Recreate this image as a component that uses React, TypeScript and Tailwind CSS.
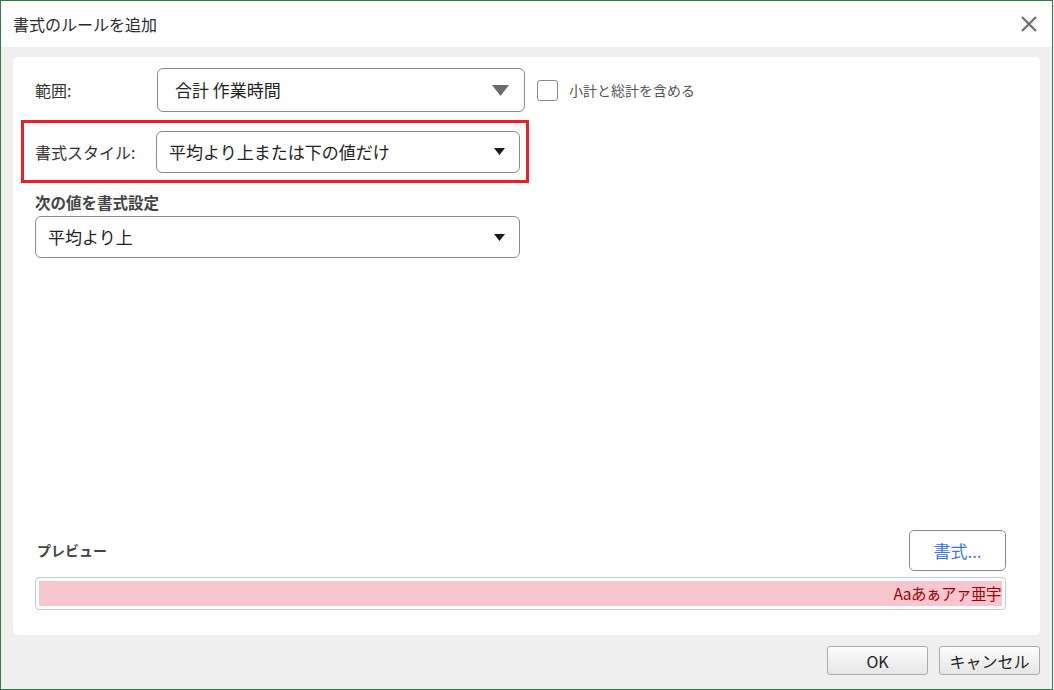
import React from "react";

const font = { fontFamily: '"Noto Sans CJK JP", "Noto Sans", sans-serif' };

function Caret({ big }: { big?: boolean }) {
  if (big) {
    return (
      <svg width="17" height="11" viewBox="0 0 17 11" className="shrink-0">
        <path d="M0 0 H17 L8.5 11 Z" fill="#6b6b6b" />
      </svg>
    );
  }
  return (
    <svg width="11" height="7" viewBox="0 0 11 7" className="shrink-0">
      <path d="M0 0 H11 L5.5 7 Z" fill="#1a1a1a" />
    </svg>
  );
}

export default function App() {
  return (
    <div
      className="w-[1053px] h-[690px] border border-[#2e7d4a] flex flex-col bg-[#efefef] text-[#333]"
      style={font}
    >
      {/* Title bar */}
      <div className="h-[46px] bg-white flex items-center justify-between pl-[12px] pr-[14px] shrink-0">
        <span className="text-[16px] text-[#2b2b2b]">書式のルールを追加</span>
        <svg width="18" height="18" viewBox="0 0 18 18">
          <path d="M2 2 L16 16 M16 2 L2 16" stroke="#6e6e6e" strokeWidth="2.2" />
        </svg>
      </div>

      {/* Body */}
      <div className="flex-1 flex flex-col px-[12px] pt-[10px]">
        <div className="h-[578px] bg-white rounded-[5px] flex flex-col pt-[11px] pb-[25px]">
          {/* Row 1 */}
          <div className="flex items-center h-[44px] pl-[22px]">
            <div className="w-[122px] text-[16px] text-[#333]">範囲:</div>
            <div className="w-[368px] h-[44px] border border-[#8a8a8a] rounded-[6px] flex items-center justify-between pl-[17px] pr-[15px]">
              <span className="text-[17px] text-[#222]">合計 作業時間</span>
              <Caret big />
            </div>
            <div className="ml-[12px] w-[21px] h-[21px] border border-[#8a8a8a] rounded-[3px]" />
            <span className="ml-[11px] text-[14px] text-[#555]">小計と総計を含める</span>
          </div>

          {/* Red highlight box */}
          <div className="ml-[8px] mt-[8px] w-[508px] h-[63px] border-[3px] border-[#e8202a] flex items-center pl-[11px]">
            <div className="w-[121px] text-[16px] text-[#333]">書式スタイル:</div>
            <div className="w-[364px] h-[42px] border border-[#8a8a8a] rounded-[6px] flex items-center justify-between pl-[12px] pr-[14px]">
              <span className="text-[17px] text-[#222]">平均より上または下の値だけ</span>
              <Caret />
            </div>
          </div>

          {/* Next values */}
          <div className="pl-[22px] mt-[7px] text-[15.5px] font-bold text-[#444] leading-[24px]">
            次の値を書式設定
          </div>
          <div className="ml-[22px] mt-[2px] w-[485px] h-[42px] border border-[#8a8a8a] rounded-[6px] flex items-center justify-between pl-[12px] pr-[14px]">
            <span className="text-[17px] text-[#222]">平均より上</span>
            <Caret />
          </div>

          {/* Preview section */}
          <div className="mt-auto ml-[22px] mr-[34px] flex flex-col">
            <div className="flex items-center justify-between h-[41px]">
              <span className="ml-[2px] text-[14px] font-bold text-[#444]">プレビュー</span>
              <div className="w-[97px] h-[41px] border border-[#8a8a8a] rounded-[5px] flex items-center justify-center text-[17px] text-[#3b78d8]">
                書式...
              </div>
            </div>
            <div className="mt-[6px] h-[33px] border border-[#c8c8c8] rounded-[4px] p-[3px] flex">
              <div className="flex-1 bg-[#f7c6ce] flex items-center justify-end pr-[1px] text-[15.5px] tracking-[-0.5px] text-[#9c0006]">
                Aaあぁアァ亜宇
              </div>
            </div>
          </div>
        </div>

        {/* Buttons */}
        <div className="flex justify-end gap-[11px] mt-[11px]">
          <div className="w-[101px] h-[29px] border border-[#acacac] rounded-[3px] bg-gradient-to-b from-[#fdfdfd] to-[#e6e6e6] flex items-center justify-center text-[16px] text-[#222]">
            OK
          </div>
          <div className="w-[101px] h-[29px] border border-[#acacac] rounded-[3px] bg-gradient-to-b from-[#fdfdfd] to-[#e6e6e6] flex items-center justify-center text-[16px] text-[#222]">
            キャンセル
          </div>
        </div>
      </div>
    </div>
  );
}
